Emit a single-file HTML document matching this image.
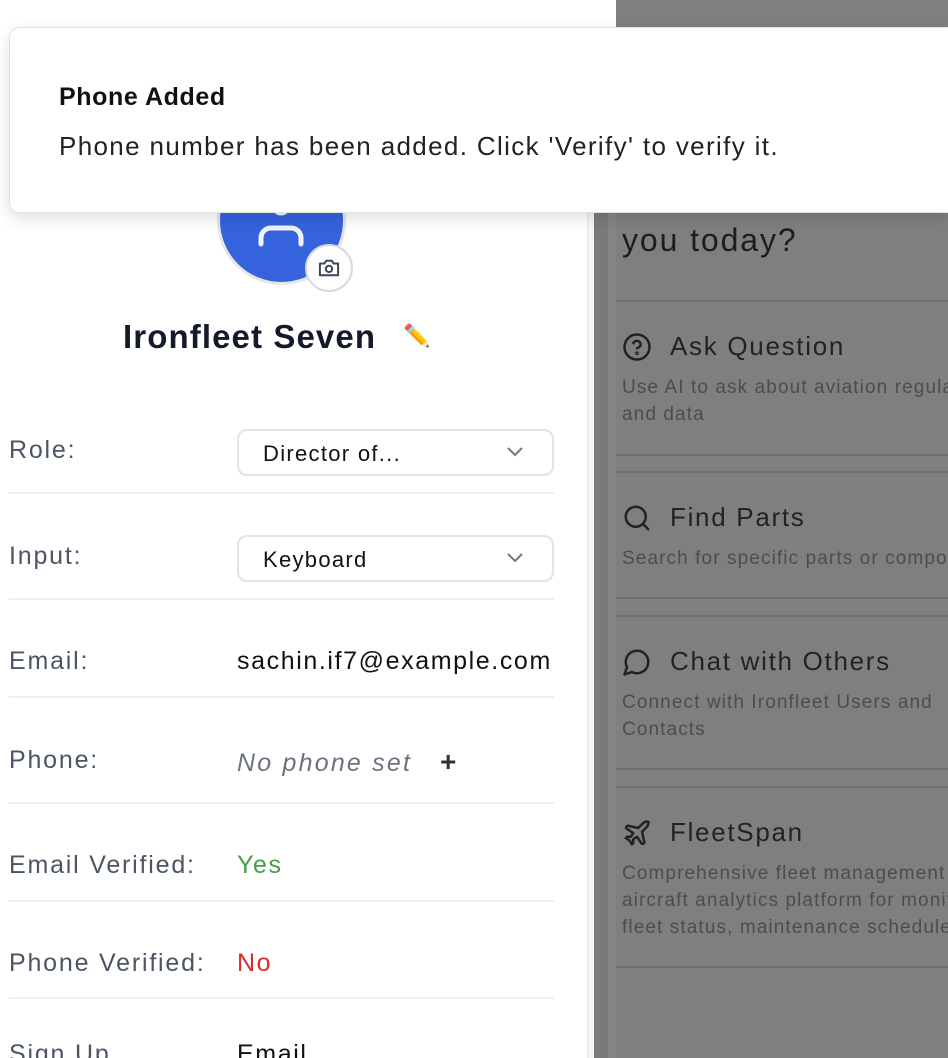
<!DOCTYPE html>
<html style="overflow:hidden;height:1058px"><head><meta charset="utf-8"><style>
*{box-sizing:border-box;margin:0;padding:0}
body{width:948px;height:1058px;overflow:hidden;position:relative;background:#fff;font-family:"Liberation Sans",sans-serif}
.abs{position:absolute}
.lbl{position:absolute;left:9px;font-size:25px;color:#4b5563;letter-spacing:1.8px}
.val{position:absolute;left:237px;font-size:25px;color:#111;letter-spacing:1.6px}
.hr{position:absolute;left:9px;width:545px;height:2px;background:#f0f0f0}
.sel{position:absolute;left:237px;width:317px;height:47px;border:2px solid #e3e3e3;border-radius:10px;font-size:22px;color:#111;padding:10px 0 0 24px;letter-spacing:1.3px}
.sel svg{position:absolute;right:28px;top:15px}
.rt{position:absolute;left:670px;right:0;overflow:hidden;white-space:nowrap;font-size:26px;color:#1f2328;letter-spacing:1.7px}
.rd{position:absolute;left:622px;right:0;overflow:hidden;font-size:19px;color:#4d4d4d;line-height:27px;letter-spacing:1.1px;white-space:nowrap}
.rl{position:absolute;left:616px;right:0;height:2px;background:#6e6e6e}
</style></head><body>
<div class="abs" style="left:616px;top:0;width:332px;height:1058px;background:#7f7f7f"></div>
<div class="abs" style="left:594px;top:213px;width:14px;height:845px;background:#7a7a7a"></div>
<div class="abs" style="left:608px;top:213px;width:8px;height:845px;background:#858585"></div>
<div class="abs" style="left:587px;top:213px;width:7px;height:845px;background:#f6f6f6;border-left:1px solid #e6e6e6"></div>
<div class="abs" style="left:0;top:121px;width:587px;height:2px;background:#e2e2e2"></div>
<div class="abs" style="left:0;top:0;width:9px;height:1058px;background:#fff"></div>

<div class="abs" style="left:622px;top:222px;font-size:32px;color:#1a1d21;letter-spacing:1.9px">you today?</div>
<div class="rl" style="top:300px"></div>
<svg class="abs" style="left:622px;top:332px" width="30" height="30" viewBox="0 0 24 24" fill="none" stroke="#1f2328" stroke-width="2" stroke-linecap="round"><circle cx="12" cy="12" r="10"/><path d="M9.1 9a3 3 0 0 1 5.8 1c0 2-3 3-3 3"/><circle cx="12" cy="17" r=".5"/></svg>
<div class="rt" style="top:331px">Ask Question</div>
<div class="rd" style="top:374px">Use AI to ask about aviation regulations<br>and data</div>
<div class="rl" style="top:454px"></div>
<div class="rl" style="top:471px"></div>
<svg class="abs" style="left:622px;top:503px" width="30" height="30" viewBox="0 0 24 24" fill="none" stroke="#1f2328" stroke-width="2" stroke-linecap="round"><circle cx="11" cy="11" r="8"/><path d="M21 21l-4.3-4.3"/></svg>
<div class="rt" style="top:502px">Find Parts</div>
<div class="rd" style="top:545px">Search for specific parts or components</div>
<div class="rl" style="top:597px"></div>
<div class="rl" style="top:615px"></div>
<svg class="abs" style="left:622px;top:647px" width="30" height="30" viewBox="0 0 24 24" fill="none" stroke="#1f2328" stroke-width="2" stroke-linecap="round" stroke-linejoin="round"><path d="M7.9 20A9 9 0 1 0 4 16.1L2 22Z"/></svg>
<div class="rt" style="top:646px">Chat with Others</div>
<div class="rd" style="top:689px">Connect with Ironfleet Users and<br>Contacts</div>
<div class="rl" style="top:768px"></div>
<div class="rl" style="top:786px"></div>
<svg class="abs" style="left:622px;top:818px" width="30" height="30" viewBox="0 0 24 24" fill="none" stroke="#1f2328" stroke-width="2" stroke-linecap="round" stroke-linejoin="round"><path d="M17.8 19.2 16 11l3.5-3.5C21 6 21.5 4 21 3c-1-.5-3 0-4.5 1.5L13 8 4.8 6.2c-.5-.1-.9.1-1.1.5l-.3.5c-.2.5-.1 1 .3 1.3L9 12l-2 3H4l-1 1 3 2 2 3 1-1v-3l3-2 3.5 5.3c.3.4.8.5 1.3.3l.5-.2c.4-.3.6-.7.5-1.2z"/></svg>
<div class="rt" style="top:817px">FleetSpan</div>
<div class="rd" style="top:860px">Comprehensive fleet management and<br>aircraft analytics platform for monitoring<br>fleet status, maintenance schedules</div>
<div class="rl" style="top:966px"></div>

<div class="abs" style="left:217px;top:156px;width:129px;height:129px;border-radius:50%;background:#3563de;border:3px solid #e6e6e9"></div>
<svg class="abs" style="left:258px;top:200px" width="46" height="50" viewBox="0 0 46 50" fill="none" stroke="#f3f3f7" stroke-width="5" stroke-linecap="round"><circle cx="23" cy="6" r="7"/><path d="M3 44V38a10 10 0 0 1 10-10h20a10 10 0 0 1 10 10v6"/></svg>
<div class="abs" style="left:305px;top:244px;width:48px;height:48px;border-radius:50%;background:#fff;border:2px solid #d8d9de"></div>
<svg class="abs" style="left:318px;top:258px" width="22" height="20" viewBox="0 0 24 22" fill="none" stroke="#3f4654" stroke-width="2.2" stroke-linejoin="round"><path d="M2 6h5l2-3h6l2 3h5v13H2z"/><circle cx="12" cy="12" r="3.5"/></svg>
<div class="abs" style="left:123px;top:318px;font-size:33px;font-weight:bold;color:#141a29;letter-spacing:1.1px">Ironfleet Seven</div>
<div class="abs" style="left:403px;top:323px;font-size:22px">✏️</div>

<div class="lbl" style="top:436px">Role:</div>
<div class="sel" style="top:429px">Director of...<svg width="18" height="12" viewBox="0 0 18 12" fill="none" stroke="#777" stroke-width="2"><path d="M2 2l7 7 7-7"/></svg></div>
<div class="hr" style="top:492px"></div>
<div class="lbl" style="top:542px">Input:</div>
<div class="sel" style="top:535px">Keyboard<svg width="18" height="12" viewBox="0 0 18 12" fill="none" stroke="#777" stroke-width="2"><path d="M2 2l7 7 7-7"/></svg></div>
<div class="hr" style="top:598px"></div>
<div class="lbl" style="top:647px">Email:</div>
<div class="val" style="top:647px">sachin.if7@example.com</div>
<div class="hr" style="top:696px"></div>
<div class="lbl" style="top:746px">Phone:</div>
<div class="val" style="top:749px;font-style:italic;color:#6b7280;letter-spacing:2.2px">No phone set</div>
<div class="abs" style="left:440px;top:746px;font-size:28px;font-weight:bold;color:#333">+</div>
<div class="hr" style="top:802px"></div>
<div class="lbl" style="top:851px">Email Verified:</div>
<div class="val" style="top:851px;color:#43a047">Yes</div>
<div class="hr" style="top:900px"></div>
<div class="lbl" style="top:949px">Phone Verified:</div>
<div class="val" style="top:949px;color:#d32f2f">No</div>
<div class="hr" style="top:997px"></div>
<div class="lbl" style="top:1040px;height:18px;overflow:hidden">Sign Up</div>
<div class="val" style="top:1040px;height:18px;overflow:hidden">Email</div>

<div class="abs" style="left:9px;top:27px;width:939px;height:186px;background:#fff;border:1px solid #e2e2e2;border-right:none;border-radius:10px 0 0 10px;box-shadow:0 6px 16px rgba(0,0,0,0.12)"></div>
<div class="abs" style="left:59px;top:83px;font-size:25px;font-weight:bold;color:#111;letter-spacing:0.6px">Phone Added</div>
<div class="abs" style="left:59px;top:131px;font-size:26px;color:#222;letter-spacing:1.35px">Phone number has been added. Click 'Verify' to verify it.</div>
</body></html>
